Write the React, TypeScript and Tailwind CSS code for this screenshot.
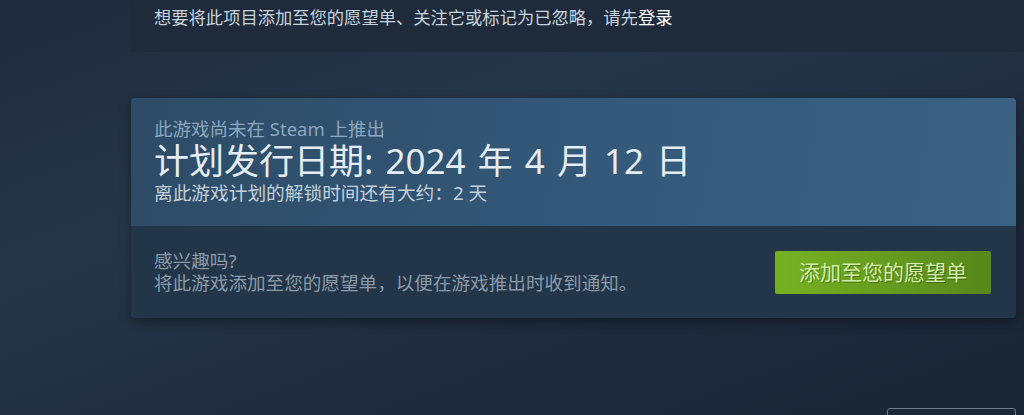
import React from 'react';

const font = { fontFamily: '"Noto Sans", "Noto Sans CJK SC", sans-serif' };

export default function App() {
  return (
    <div
      className="relative h-[415px] w-[1024px] overflow-hidden bg-[linear-gradient(160deg,#1e2a3b_0%,#263649_35%,#1d2a3b_70%,#1b2636_100%)]"
      style={font}
    >
      <div className="pl-[131px]">
        {/* login prompt */}
        <div className="h-[52px] bg-[#1f2b3b] pl-[23px] pt-[5px] text-[17.3px] leading-[26px] text-[#c6d4df]">
          想要将此项目添加至您的愿望单、关注它或标记为已忽略，请先
          <span className="text-white">登录</span>
        </div>

        {/* coming soon card */}
        <div className="mt-[46px] w-[885px] overflow-hidden rounded-[4px] shadow-[0_4px_12px_rgba(0,0,0,0.35)]">
          <div className="flex h-[128px] flex-col bg-[linear-gradient(100deg,#2d4b66_0%,#34597a_55%,#3a6283_100%)] pl-[23px] pt-[19px]">
            <div className="text-[18.5px] leading-[23px] text-[#8ba7bf]">此游戏尚未在 Steam 上推出</div>
            <div className="text-[35px] leading-[41px] text-[#e4edf3] [word-spacing:3px]">计划发行日期: 2024 年 4 月 12 日</div>
            <div className="text-[18.7px] leading-[24px] text-[#c3d1dc]">离此游戏计划的解锁时间还有大约：2 天</div>
          </div>
          <div className="flex h-[92px] items-center justify-between bg-[#223549] pl-[23px] pr-[25px]">
            <div className="text-[18.6px] leading-[22px] text-[#8b9aa8]">
              <div>感兴趣吗?</div>
              <div>将此游戏添加至您的愿望单，以便在游戏推出时收到通知。</div>
            </div>
            <button className="mt-[1px] flex h-[43px] w-[216px] items-center justify-center rounded-[2px] bg-[linear-gradient(to_right,#75b022_5%,#588a1b_95%)] text-[21px] text-[#d2efa9] [text-shadow:1px_1px_0_rgba(0,0,0,0.3)]">
              添加至您的愿望单
            </button>
          </div>
        </div>

        {/* clipped menu button at bottom */}
        <div className="ml-[756px] mt-[90px] h-[40px] w-[129px] rounded-[3px] border border-[#6b7b8c] bg-[#1b2636] pl-[24px] pt-[3px] text-[16px] font-bold text-white">
          浏览全部
        </div>
      </div>
    </div>
  );
}
